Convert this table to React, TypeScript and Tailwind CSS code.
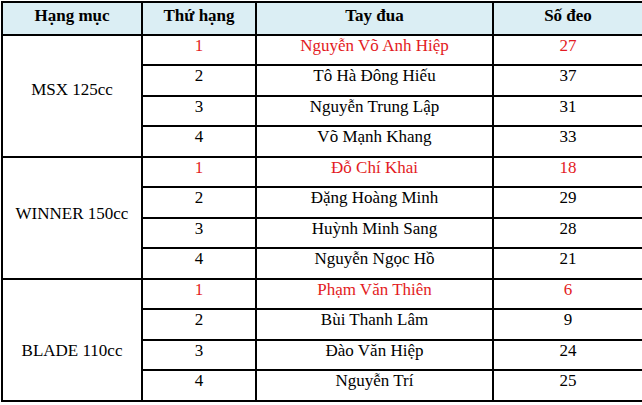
type Racer = {
  rank: number;
  name: string;
  bib: string;
};

type Group = {
  category: string;
  // nudges the merged cell's label the way the source document has it
  labelPad: string;
  racers: Racer[];
};

const groups: Group[] = [
  {
    category: 'MSX 125cc',
    labelPad: 'pb-[14px]',
    racers: [
      { rank: 1, name: 'Nguyễn Võ Anh Hiệp', bib: '27' },
      { rank: 2, name: 'Tô Hà Đông Hiếu', bib: '37' },
      { rank: 3, name: 'Nguyễn Trung Lập', bib: '31' },
      { rank: 4, name: 'Võ Mạnh Khang', bib: '33' },
    ],
  },
  {
    category: 'WINNER 150cc',
    labelPad: 'pb-[10px]',
    racers: [
      { rank: 1, name: 'Đỗ Chí Khai', bib: '18' },
      { rank: 2, name: 'Đặng Hoàng Minh', bib: '29' },
      { rank: 3, name: 'Huỳnh Minh Sang', bib: '28' },
      { rank: 4, name: 'Nguyễn Ngọc Hồ', bib: '21' },
    ],
  },
  {
    category: 'BLADE 110cc',
    labelPad: 'pt-[20px]',
    racers: [
      { rank: 1, name: 'Phạm Văn Thiên', bib: '6' },
      { rank: 2, name: 'Bùi Thanh Lâm', bib: '9' },
      { rank: 3, name: 'Đào Văn Hiệp', bib: '24' },
      { rank: 4, name: 'Nguyễn Trí', bib: '25' },
    ],
  },
];

const cell = 'border-2 border-black text-center align-top p-0 leading-[19px]';

export default function App() {
  return (
    <div className="w-[642px] h-[405px] bg-white pt-[1px] pl-[1px] [font-family:'Liberation_Serif','Times_New_Roman',serif] text-[17px] text-black">
      <table className="table-fixed border-collapse w-[641px]">
        <colgroup>
          <col className="w-[140px]" />
          <col className="w-[114px]" />
          <col className="w-[237px]" />
          <col className="w-[150px]" />
        </colgroup>
        <thead>
          <tr className="h-[33px] bg-[#dbeef4] font-bold">
            <th className={`${cell} pt-[3px]`}>Hạng mục</th>
            <th className={`${cell} pt-[3px]`}>Thứ hạng</th>
            <th className={`${cell} pt-[3px]`}>Tay đua</th>
            <th className={`${cell} pt-[3px]`}>Số đeo</th>
          </tr>
        </thead>
        <tbody>
          {groups.map((group) =>
            group.racers.map((racer, i) => {
              const winner = racer.rank === 1;
              const tone = winner ? 'text-[#e31b23]' : '';
              return (
                <tr key={group.category + racer.rank} className={i % 2 === 0 ? 'h-[30px]' : 'h-[31px]'}>
                  {i === 0 && (
                    <td
                      rowSpan={4}
                      className={`border-2 border-black text-center align-middle p-0 leading-[19px] ${group.labelPad}`}
                    >
                      {group.category}
                    </td>
                  )}
                  <td className={`${cell} ${tone}`}>{racer.rank}</td>
                  <td className={`${cell} ${tone}`}>{racer.name}</td>
                  <td className={`${cell} ${tone}`}>{racer.bib}</td>
                </tr>
              );
            }),
          )}
        </tbody>
      </table>
    </div>
  );
}
